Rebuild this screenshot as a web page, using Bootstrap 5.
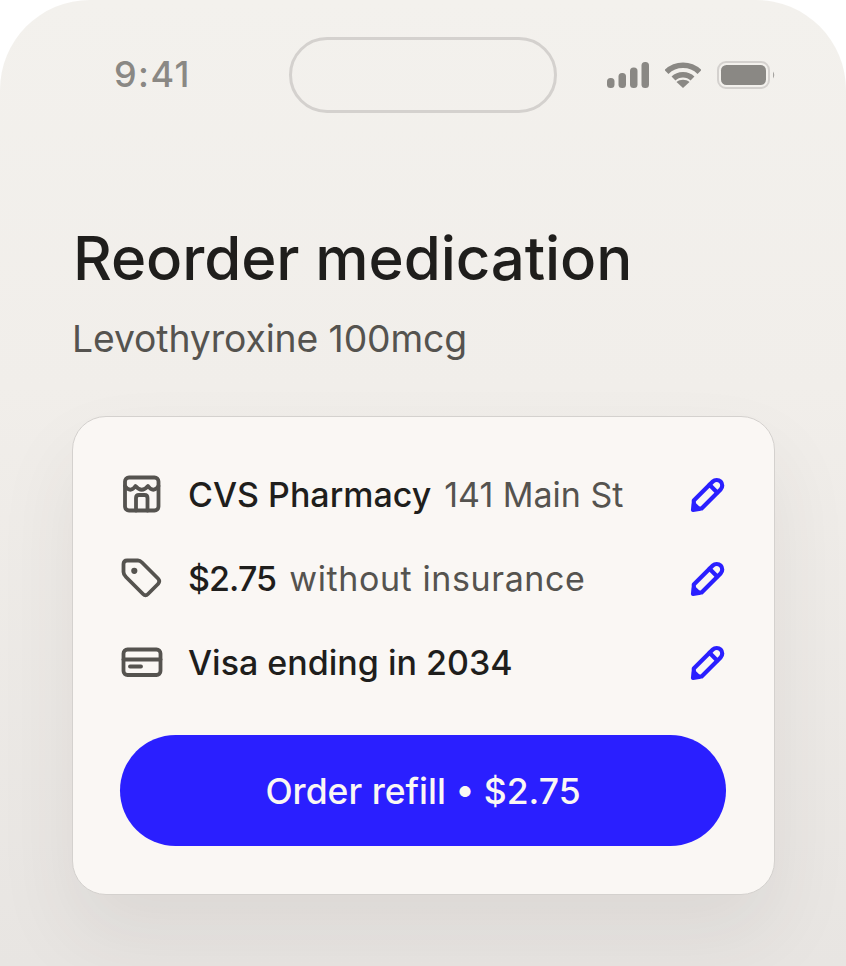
<!DOCTYPE html>
<html lang="en"><head><meta charset="utf-8"><title>Reorder medication</title>
<link href="https://cdn.jsdelivr.net/npm/bootstrap@5.3.0/dist/css/bootstrap.min.css" rel="stylesheet">
<style>
html,body{margin:0;background:#fff;height:966px;overflow:hidden}
body{font-family:Inter,"Noto Sans",sans-serif;color:#1f1e1c}
.phone{width:846px;height:966px;border-radius:90px 90px 0 0;background:linear-gradient(180deg,#f3f1ed 0%,#f1eeea 40%,#e8e5e2 100%);overflow:hidden}
.statusbar{height:149px;padding:37px 70px 0 114px}
.clock{width:175px;height:73px;font-size:36px;font-weight:500;color:#8a8884;letter-spacing:1.4px}
.island{width:268px;height:76px;border:3px solid #d4d1ce;border-radius:38px}
.sysicons{margin-left:50px;height:75px;gap:16px}
.main{padding:0 71px 0 72px}
.title{font-size:60px;font-weight:550;line-height:68px;margin:75px 0 0 1px;color:#1f1e1c;letter-spacing:-.1px}
.sub{font-size:37.300px;line-height:44px;margin:25px 0 0 0;color:#55534f;font-weight:400;letter-spacing:-.1px}
.panel{margin-top:55px;height:479px;background:#faf7f4;border:1px solid #d4d1ce;border-radius:34px;padding:35.500px 48px 48px 47px;box-shadow:0 40px 80px rgba(60,50,45,.08)}
.rowline{height:84px;gap:25px}
.rowicon{width:43px;height:43px;flex:none}
.rowtext{font-size:34px;font-weight:540;color:#1f1e1c;gap:13px}
.rowtext .detail{font-weight:400;color:#55534f}
.rowtext .wide{letter-spacing:.6px}
.rowtext .tight{letter-spacing:-.9px}
.order{height:111px;width:100%;margin-top:30.500px;padding-top:8px;background:#2a1fff;border:0;border-radius:56px;color:#faf7f4;font-size:35.500px;font-weight:500}
.order:hover{background:#2a1fff;color:#faf7f4}
</style></head>
<body>
<div class="phone">
  <div class="statusbar d-flex align-items-start">
    <div class="clock d-flex align-items-center">9:41</div>
    <div class="island"></div>
    <div class="sysicons d-flex align-items-center">
      <svg width="42" height="26" viewBox="0 0 42 26" fill="#8a8884"><rect x="0" y="16" width="7.500" height="10" rx="3.500"/><rect x="11.500" y="11" width="7.500" height="15" rx="3.500"/><rect x="23" y="5.500" width="7.500" height="20.500" rx="3.500"/><rect x="34.500" y="0" width="7.500" height="26" rx="3.500"/></svg>
      <svg width="36" height="26" viewBox="0 0 36 26" fill="none" stroke="#8a8884" stroke-width="5.500"><path d="M1.500 10C10.500 1 25.500 1 34.500 10"/><path d="M8.500 16.500C13.500 11.500 22.500 11.500 27.500 16.500"/><path d="M11.500 20L18 26L24.500 20C21 17 15 17 11.500 20Z" fill="#8a8884" stroke="none"/></svg>
      <svg width="58" height="28" viewBox="0 0 58 28"><rect x="1" y="1" width="51" height="26" rx="8" fill="none" stroke="#d4d1ce" stroke-width="2"/><rect x="4" y="4" width="45" height="20" rx="5.500" fill="#8a8884"/><path d="M56 10.500Q58.500 14 56 17.500Z" fill="#a5a3a0"/></svg>
    </div>
  </div>
  <div class="main">
    <h1 class="title">Reorder medication</h1>
    <p class="sub">Levothyroxine 100mcg</p>
    <div class="panel">
      <div class="rowline d-flex align-items-center">
        <svg class="rowicon" viewBox="0 0 43 43" fill="none" stroke="#55534f" stroke-width="3.800" stroke-linejoin="round" stroke-linecap="round"><rect x="5" y="4.500" width="33.500" height="33" rx="4"/><path d="M5 13q5.300 7.500 10.500 0q6.250 7.500 12.500 0q5.300 7.500 10.500 0"/><path d="M16 37.500V25q0-3 3-3h5.500q3 0 3 3v12.500"/></svg>
        <div class="rowtext d-flex flex-grow-1"><span>CVS Pharmacy</span><span class="detail">141 Main St</span></div>
        <svg class="rowicon" viewBox="0 0 43 43" fill="none" stroke="#2a1fff" stroke-width="4.200" stroke-linejoin="round" stroke-linecap="round"><path d="M10.800 36L10.800 27.600L29.800 8.600A5.500 5.500 0 0 1 37.600 16.400L18.600 35.400Z"/><path d="M26.500 11.700L34.200 19.500"/><path d="M10 37L10.800 31L16 36Z" fill="#2a1fff"/></svg>
      </div>
      <div class="rowline d-flex align-items-center">
        <svg class="rowicon" viewBox="0 0 43 43" fill="none" stroke="#55534f" stroke-width="3.800" stroke-linejoin="round" stroke-linecap="round"><path d="M3.500 7Q3.500 3.500 7 3.500H18Q20 3.500 22 5.500L38 21.500Q40.500 24 38 27L28 37Q25.500 39.500 23 37L6 20Q3.500 17.500 3.500 15Z"/><circle cx="14.300" cy="13.800" r="1.200" fill="#55534f"/></svg>
        <div class="rowtext d-flex flex-grow-1"><span class="tight">$2.75</span><span class="detail wide">without insurance</span></div>
        <svg class="rowicon" viewBox="0 0 43 43" fill="none" stroke="#2a1fff" stroke-width="4.200" stroke-linejoin="round" stroke-linecap="round"><path d="M10.800 36L10.800 27.600L29.800 8.600A5.500 5.500 0 0 1 37.600 16.400L18.600 35.400Z"/><path d="M26.500 11.700L34.200 19.500"/><path d="M10 37L10.800 31L16 36Z" fill="#2a1fff"/></svg>
      </div>
      <div class="rowline d-flex align-items-center">
        <svg class="rowicon" viewBox="0 0 43 43" fill="none" stroke="#55534f" stroke-width="3.800" stroke-linejoin="round" stroke-linecap="round"><rect x="3.500" y="8.500" width="37" height="25.500" rx="4"/><path d="M3.500 18.500H40.500"/><path d="M10 25.500H21"/></svg>
        <div class="rowtext d-flex flex-grow-1"><span>Visa ending in 2034</span></div>
        <svg class="rowicon" viewBox="0 0 43 43" fill="none" stroke="#2a1fff" stroke-width="4.200" stroke-linejoin="round" stroke-linecap="round"><path d="M10.800 36L10.800 27.600L29.800 8.600A5.500 5.500 0 0 1 37.600 16.400L18.600 35.400Z"/><path d="M26.500 11.700L34.200 19.500"/><path d="M10 37L10.800 31L16 36Z" fill="#2a1fff"/></svg>
      </div>
      <button type="button" class="btn order">Order refill • $2.75</button>
    </div>
  </div>
</div>
<script src="https://cdn.jsdelivr.net/npm/bootstrap@5.3.0/dist/js/bootstrap.bundle.min.js"></script>
</body></html>
